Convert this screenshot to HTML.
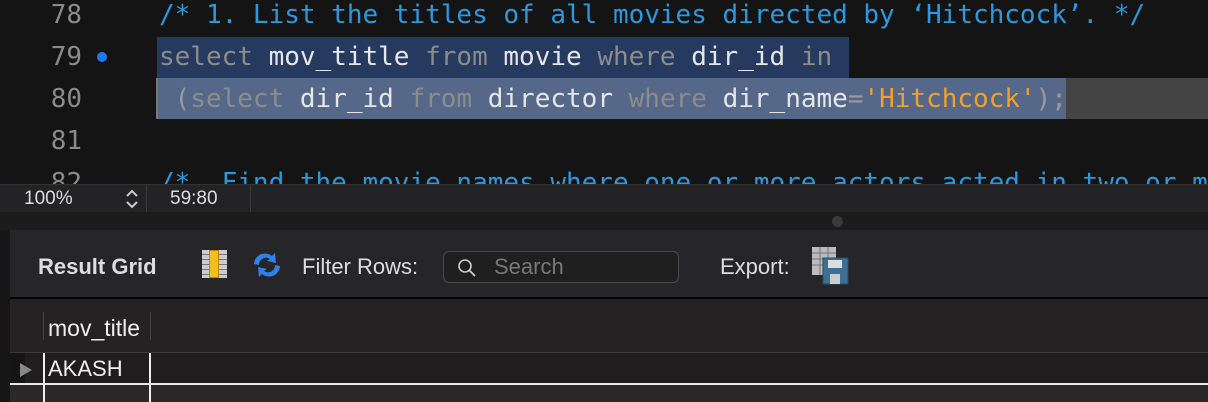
<!DOCTYPE html>
<html><head><meta charset="utf-8"><style>
*{margin:0;padding:0;box-sizing:border-box}
body{width:1208px;height:402px;overflow:hidden;background:#1e1e1e;position:relative;font-family:"Liberation Sans",sans-serif}
.ed{position:absolute;left:0;top:0;width:1208px;height:184px;background:#141414;overflow:hidden}
.ln{position:absolute;left:0;width:82px;text-align:right;font:26px "DejaVu Sans Mono",monospace;color:#8a8a8a;height:42px;line-height:42px}
.code{position:absolute;left:159px;font:26px "DejaVu Sans Mono",monospace;white-space:pre;height:42px;line-height:42px;color:#e6e6e6}
.c{color:#2c98de}.k{color:#8c8c8c}.s{color:#f0a12a}.p{color:#9a9a9a}
.sb{position:absolute;left:0;top:184px;width:1208px;height:28px;background:#232325;border-top:1px solid #333}
.tb{position:absolute;left:10px;top:230px;width:1198px;height:67px;background:#262628}
.sep{position:absolute;left:10px;top:297px;width:1198px;height:2px;background:#050505}
.hd{position:absolute;left:10px;top:299px;width:1198px;height:53px;background:#242222}
.row{position:absolute;left:10px;top:353px;width:1198px;height:31px;background:#1f1d1d}
</style></head><body>
<div class="ed">
<div style="position:absolute;left:157px;top:37px;width:692px;height:41px;background:#263a5f"></div>
<div style="position:absolute;left:157px;top:78px;width:1051px;height:41px;background:#444"></div>
<div style="position:absolute;left:157px;top:78px;width:909px;height:41px;background:#56688a"></div>
<div style="position:absolute;left:156px;top:78px;width:2px;height:41px;background:#777"></div>
<div class="ln" style="top:-6px">78</div>
<div class="ln" style="top:36px">79</div>
<div class="ln" style="top:78px">80</div>
<div class="ln" style="top:120px">81</div>
<div class="ln" style="top:162px">82</div>
<div style="position:absolute;left:97px;top:52px;width:10px;height:10px;border-radius:50%;background:#1a7bf0"></div>
<div class="code c" style="top:-6px">/* 1. List the titles of all movies directed by ‘Hitchcock’. */</div>
<div class="code" style="top:36px"><span class="k">select</span> mov_title <span class="k">from</span> movie <span class="k">where</span> dir_id <span class="k">in</span></div>
<div class="code" style="top:78px"> <span class="p">(</span><span class="k">select</span> dir_id <span class="k">from</span> director <span class="k">where</span> dir_name<span class="p">=</span><span class="s">'Hitchcock'</span><span class="p">);</span></div>
<div class="code c" style="top:162px">/*  Find the movie names where one or more actors acted in two or more movies. */</div>
</div>
<div class="sb">
<span style="position:absolute;left:24px;top:3px;font-size:19px;color:#ddd">100%</span>
<svg style="position:absolute;left:124px;top:3px" width="16" height="22"><path d="M3 8 L8 3 L13 8 M3 14 L8 19 L13 14" fill="none" stroke="#ccc" stroke-width="2"/></svg>
<div style="position:absolute;left:146px;top:0;width:1px;height:27px;background:#3a3a3a"></div>
<span style="position:absolute;left:170px;top:3px;font-size:19px;color:#ddd">59:80</span>
<div style="position:absolute;left:250px;top:0;width:1px;height:27px;background:#3a3a3a"></div>
</div>
<div style="position:absolute;left:0;top:212px;width:1208px;height:18px;background:#1c1c1d"></div>
<div style="position:absolute;left:832px;top:216px;width:11px;height:11px;border-radius:50%;background:#3a3a3a"></div>
<div style="position:absolute;left:0;top:230px;width:10px;height:172px;background:#161616"></div>
<div class="tb">
<span style="position:absolute;left:28px;top:24px;font-size:22px;font-weight:bold;color:#ddd">Result Grid</span>
<div style="position:absolute;left:192px;top:20px;width:25px;height:28px;background:repeating-linear-gradient(#ccc 0 4px,#777 4px 5px)"></div>
<div style="position:absolute;left:199px;top:20px;width:10px;height:28px;background:#f0c020;border:1px solid #c08000"></div>
<svg style="position:absolute;left:240px;top:20px" width="34" height="30" viewBox="0 0 34 30"><path d="M4 14 A11 11 0 0 1 22 6 L25 3 L26 13 L17 11 L20 9 A7 7 0 0 0 9 15 Z" fill="#2f80e8"/><path d="M30 16 A11 11 0 0 1 12 24 L9 27 L8 17 L17 19 L14 21 A7 7 0 0 0 25 15 Z" fill="#2f80e8"/></svg>
<span style="position:absolute;left:292px;top:24px;font-size:22px;color:#ddd">Filter Rows:</span>
<div style="position:absolute;left:433px;top:21px;width:236px;height:32px;border:1px solid #4a4a4a;border-radius:6px;background:#1f1f20"></div>
<svg style="position:absolute;left:447px;top:28px" width="20" height="20"><circle cx="8" cy="8" r="6" fill="none" stroke="#ccc" stroke-width="1.6"/><line x1="12.5" y1="12.5" x2="18" y2="18" stroke="#ccc" stroke-width="1.8"/></svg>
<span style="position:absolute;left:484px;top:24px;font-size:22px;color:#777">Search</span>
<span style="position:absolute;left:710px;top:24px;font-size:22px;color:#ddd">Export:</span>
<svg style="position:absolute;left:802px;top:17px" width="40" height="40"><rect x="0" y="0" width="24" height="28" fill="#bbb"/><path d="M0 6H24M0 12H24M0 18H24M8 0V28M16 0V28" stroke="#777" stroke-width="1"/><rect x="11" y="11" width="25" height="26" fill="#3d6e94" stroke="#2a4a66"/><rect x="16" y="13" width="14" height="8" fill="#ddd"/><rect x="18" y="27" width="10" height="10" fill="#ccc"/></svg>
</div>
<div class="sep"></div>
<div class="hd">
<div style="position:absolute;left:33px;top:13px;width:1px;height:28px;background:#444"></div>
<span style="position:absolute;left:38px;top:16px;font-size:23px;color:#eee">mov_title</span>
<div style="position:absolute;left:140px;top:13px;width:1px;height:28px;background:#444"></div>
</div>
<div style="position:absolute;left:10px;top:352px;width:1198px;height:1px;background:#3c3a3a"></div>
<div class="row">
<div style="position:absolute;left:0;top:0;width:15px;height:31px;background:#151515"></div>
<div style="position:absolute;left:10px;top:10px;width:0;height:0;border-left:12px solid #888;border-top:7px solid transparent;border-bottom:7px solid transparent"></div>
<span style="position:absolute;left:38px;top:3px;font-size:22px;color:#eee">AKASH</span>
</div>
<div style="position:absolute;left:43px;top:353px;width:2px;height:49px;background:#eee"></div>
<div style="position:absolute;left:149px;top:353px;width:2px;height:49px;background:#eee"></div>
<div style="position:absolute;left:10px;top:383px;width:1198px;height:2px;background:#e8e8e8"></div>
<div style="position:absolute;left:10px;top:385px;width:1198px;height:17px;background:#2a2828"></div>
<div style="position:absolute;left:43px;top:385px;width:2px;height:17px;background:#eee"></div>
<div style="position:absolute;left:149px;top:385px;width:2px;height:17px;background:#eee"></div>
</body></html>
